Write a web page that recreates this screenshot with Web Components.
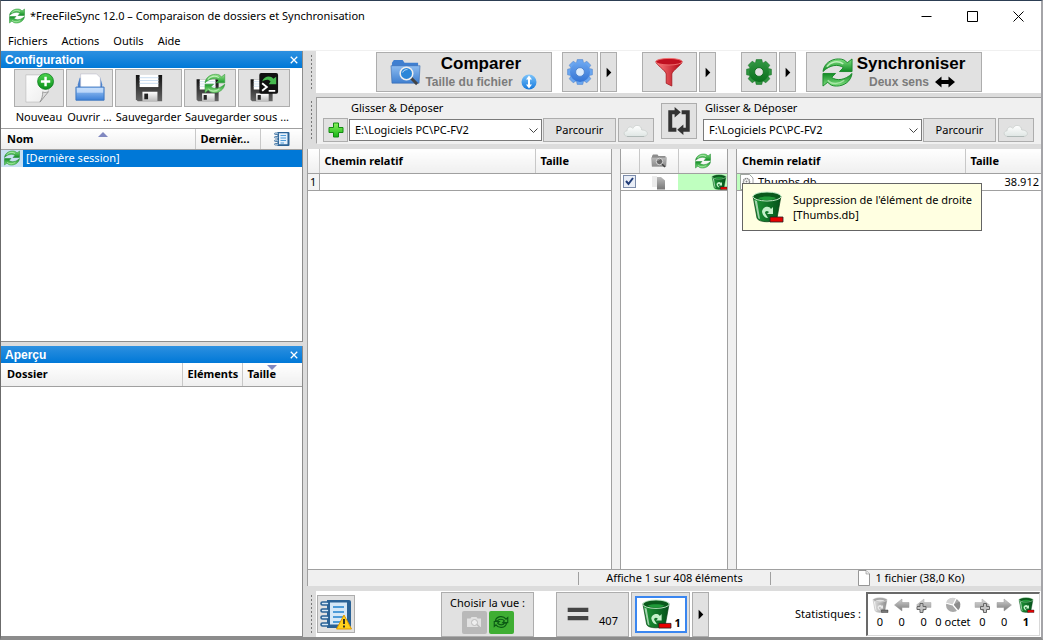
<!DOCTYPE html>
<html lang="fr">
<head>
<meta charset="utf-8">
<title>*FreeFileSync 12.0 – Comparaison de dossiers et Synchronisation</title>
<style>
  html, body { margin: 0; height: 100%; }
  body {
    font: 11px/16px "Noto Sans", "Open Sans", sans-serif;
    color: #000;
    background: #d4d2d8;
    overflow: hidden;
  }
</style>
</head>
<body>
<ffs-window></ffs-window>

<script>
const BASE = `
  *, *::before, *::after { box-sizing: border-box; }
  button, select { font: inherit; color: inherit; margin: 0; padding: 0; }
  table { border-collapse: collapse; border-spacing: 0; table-layout: fixed; width: 100%; }
  th, td { padding: 0; text-align: left; font-weight: normal; white-space: nowrap; overflow: hidden; }
  thead th { font-weight: bold; background: linear-gradient(#fff, #efefef); border-bottom: 1px solid #a0a0a0; }
`;

function define(name, css, html, setup) {
  const tpl = document.createElement('template');
  customElements.define(name, class extends HTMLElement {
    constructor() {
      super();
      this.attachShadow({ mode: 'open' });
    }
    connectedCallback() {
      if (this.shadowRoot.childNodes.length) return;
      tpl.innerHTML = `<style>${BASE}${css}</style>${typeof html === 'function' ? html(this) : html}`;
      this.shadowRoot.append(tpl.content.cloneNode(true));
      if (setup) setup(this);
    }
  });
}

/* ---------- icons ---------- */
const lin = (id, a, b, x2 = 0, y2 = 1) =>
  `<linearGradient id="${id}" x1="0" y1="0" x2="${x2}" y2="${y2}"><stop offset="0" stop-color="${a}"/><stop offset="1" stop-color="${b}"/></linearGradient>`;

const syncShape = (fill, stroke) => {
  const d = 'M1 15C2 7 9 2 17 2c4 0 7 1 9 4l5-4v13H18l4-4C17 7 8 8 1 15z';
  return `<path d="${d}" fill="${fill}" stroke="${stroke}"/><path d="M5 10C9 5 16 3 22 7" fill="none" stroke="#d4f7cf" stroke-width="1.600" opacity=".8"/>
    <path d="${d}" transform="rotate(180 16 16)" fill="${fill}" stroke="${stroke}"/><path d="M6 24c4 5 12 4 17 0" fill="none" stroke="#d4f7cf" stroke-width="1.600" opacity=".6"/>`;
};

const gear = (a, b, edge, hole) => {
  let teeth = '';
  for (let i = 0; i < 8; i++) teeth += `<path d="M11.500 8 12.800 1.800h6.400L20.500 8z" transform="rotate(${i * 45} 16 16)"/>`;
  return `<defs>${lin('g', a, b)}</defs><g fill="${a}" stroke="${edge}" stroke-width=".6">${teeth}</g>
    <circle cx="16" cy="16" r="11.500" fill="url(#g)"/><circle cx="16" cy="16" r="5" fill="${hole}" stroke="${edge}"/>`;
};

const bucket = (a, b, inner, edge, mark, badge) => `<defs>${lin('g', a, b, 1, 0)}</defs>
  <path d="M2 5 6 27c1 5 19 5 20 0L30 5z" fill="url(#g)" stroke="${edge}" stroke-width=".7"/>
  <path d="M3.500 9 7 26c0 1 1 2 2 2L6 10z" fill="#fff" opacity=".6"/>
  <ellipse cx="16" cy="5.500" rx="14" ry="4.500" fill="${inner}" stroke="${mark}"/>
  <path d="M7 7c4 3 14 3 18 0-5-2-13-2-18 0z" fill="${a}"/>
  <path d="M11 21c0-5 7-7 9-3l2-2v7h-6l2-2c-2-2-4-1-4 1l3 5c-3 0-5-2-6-6z" fill="${mark}"/>
  <path d="M19 26h13v5H19z" fill="${badge}" stroke="#222" stroke-width=".8"/>`;

const floppy = `<defs>${lin('g', '#111', '#666')}${lin('m', '#fff', '#bbb')}</defs>
  <path d="M2 2h28v28H4l-2-2z" fill="url(#g)"/><path d="M6 2h20v13H6z" fill="#fff"/>
  <path d="M6 5h20M6 8h20M6 11h20" stroke="#c8dcf0"/><path d="M9 20h16v10H9z" fill="url(#m)"/>
  <path d="M11 22h4v6h-4z" fill="#222"/>`;

const folderLens = (a, b, edge, lens) => `<defs>${lin('g', a, b)}</defs>
  <path d="M2 6 4 3h9l2 3h14v6H2z" fill="${b}"/><path d="M1 9h30l-1 18H2z" fill="url(#g)" stroke="${edge}" stroke-width=".6"/>
  <path d="m21 21 7 7" stroke="#444" stroke-width="3"/><circle cx="17" cy="17" r="6.500" fill="${lens}" stroke="#eee" stroke-width="1.600"/>
  <path d="M13 16c1-3 4-3 5-3" stroke="#fff" fill="none" opacity=".7"/>`;

const notebook = bg => `<path d="M7 2h22a2 2 0 0 1 2 2v24a2 2 0 0 1-2 2H7z" fill="#2a6296"/>
  <path d="M10 4.500h17v22H10z" fill="${bg}"/><path d="M13 9h11M13 14h11M13 19h11M13 24h7" stroke="#4d9bd8" stroke-width="2"/>
  <g fill="${bg}" stroke="#2a6296" stroke-width="1.600"><rect x="1" y="4" width="8" height="3" rx="1.500"/><rect x="1" y="11" width="8" height="3" rx="1.500"/><rect x="1" y="18" width="8" height="3" rx="1.500"/><rect x="1" y="25" width="8" height="3" rx="1.500"/></g>`;

const grayLeft = 'M1 16 16 4v7h14v10H16v7z';
const grayRight = 'M31 16 16 4v7H2v10h14v7z';
const grayPlus = x => `<path d="M${x} 13h6v6h6v6h-6v6h-6v-6h-6v-6h6z" fill="#c4c4c4" stroke="#666" stroke-width="2"/>`;

const ICONS = {
  sync: `<defs>${lin('g', '#7fe07f', '#118a24')}</defs>${syncShape('url(#g)', '#1c8a2c')}`,
  'sync-line': `<path d="M6 14C8 5 20 4 25 11l3-3v9h-9l3-3c-3-4-10-4-12 0zM26 18C24 27 12 28 7 21l-3 3v-9h9l-3 3c3 4 10 4 12 0z" fill="none" stroke="#0b5a14" stroke-width="2"/>`,
  'page-new': `<defs>${lin('g', '#fff', '#ececec', 1, 1)}${lin('n', '#4cd44c', '#0b8f1c')}</defs>
    <path d="M2 2h24v18l-9 11H2z" fill="url(#g)" stroke="#bbb" stroke-width=".7"/><path d="M26 20c-3 1-5 1-6 0 0 4-1 8-3 11z" fill="#ddd" stroke="#888" stroke-width=".8"/>
    <circle cx="23" cy="9" r="8.500" fill="url(#n)" stroke="#08781a" stroke-width=".8"/><path d="M23 4v10M18 9h10" stroke="#fff" stroke-width="2.600"/>`,
  open: `<defs>${lin('g', '#a8cdf8', '#3c80d8')}</defs><path d="M3 12 5 5h22l2 7v4H3z" fill="#4d83cc"/><path d="M6 1h17l4 4v12H6z" fill="#fff" stroke="#bbc" stroke-width=".6"/>
    <path d="M1 15h30v14H1z" fill="url(#g)" stroke="#3a74bf"/><path d="M2 16h28v5H2z" fill="#d4e7fd" opacity=".7"/>`,
  save: floppy,
  'save-sync': `<g transform="translate(0 5) scale(.84)">${floppy}</g><g transform="translate(10 0) scale(.7)"><defs>${lin('s', '#9be88f', '#189a2a')}</defs>${syncShape('url(#s)', '#3c9c42')}</g>`,
  'save-batch': `<g transform="translate(0 5) scale(.84)">${floppy}</g><rect x="11" width="20" height="22" rx="2" fill="#111"/>
    <path d="M14 9c2-6 9-7 12-3l3-2v8h-8l2-3c-2-3-6-2-9 0z" fill="#46b94e"/><path d="m14 11 5 4-5 4M21 19h7" fill="none" stroke="#fff" stroke-width="2"/>`,
  notebook: notebook('#e4f0fb'),
  log: notebook('#d6e8f7') + `<path d="M24 17 31.500 31h-15z" fill="#ffd21c" stroke="#e09a00"/><path d="M24 21v5M24 27.500v2" stroke="#222" stroke-width="1.800"/>`,
  compare: folderLens('#8dbcf0', '#3f7fd0', '#3468ad', '#2a86d8'),
  'compare-gray': folderLens('#b8b8b8', '#8c8c8c', '#888', '#666'),
  camera: `<path d="M2 9h7l2-3h10l2 3h7v17H2z" fill="#e2e2e2"/><circle cx="17" cy="17" r="6" fill="#eee" stroke="#bbb" stroke-width="2"/><path d="m22 21 6 6" stroke="#bbb" stroke-width="3"/>`,
  size: `<defs>${lin('g', '#7cc4fb', '#1478dc')}</defs><circle cx="16" cy="16" r="15" fill="url(#g)"/><path d="m16 3 6 8h-4v10h4l-6 8-6-8h4V11h-4z" fill="#fff"/>`,
  both: `<path d="m-4 16 13-11v7h14V5l13 11-13 11v-7H9v7z" fill="#000"/>`,
  'gear-blue': gear('#6aa6f0', '#3474d4', '#4a80cc', '#dcebfb'),
  'gear-green': gear('#2f9440', '#0a701d', '#0d6b1c', '#e1e1e1'),
  filter: `<defs>${lin('g', '#ff8080', '#b00010', 1, 0)}</defs><path d="M2 5c0 3 10 9 11 13v10l6 3V18c1-4 11-10 11-13z" fill="url(#g)" stroke="#a01018" stroke-width=".8"/><ellipse cx="16" cy="5" rx="14" ry="3.500" fill="#c01020" stroke="#f07070"/>`,
  plus: `<defs>${lin('g', '#8af45c', '#14b414')}</defs><path d="M11 2h10v9h9v10h-9v9H11v-9H2V11h9z" fill="url(#g)" stroke="#128a12" stroke-width="2"/>`,
  cloud: `<defs>${lin('g', '#fff', '#dfe6e4')}</defs><path d="M6 24c-6 0-6-7-1-7 0-5 5-6 7-3 3-6 11-4 11 2 9 0 9 8 2 8z" fill="url(#g)" stroke="#c4cac8" stroke-width=".8"/><path d="M5 24h21" stroke="#a9b3b0"/>`,
  swap: `<g fill="none" stroke="#333" stroke-width="4.500"><path d="M13 26H6V6h6"/><path d="M19 6h7v20h-6"/></g><path d="m11 0 7 6-7 6zM21 20l-7 6 7 6z" fill="#333"/>`,
  doc: `<path d="M5 1h15l7 7v23H5z" fill="#fff" stroke="#777" stroke-width="1.500"/><path d="M20 1v7h7" fill="#eee" stroke="#777"/>`,
  'doc-gear': `<path d="M3 1h18l7 7v23H3z" fill="#fff" stroke="#888" stroke-width="1.500"/><circle cx="15" cy="15" r="6" fill="none" stroke="#888" stroke-width="3" stroke-dasharray="3 1"/><circle cx="15" cy="15" r="2" fill="#888"/>`,
  files: `<path d="M2 4h10v22H2z" fill="#ececec"/><defs>${lin('g', '#bbb', '#777')}</defs><path d="M12 6h8l8 7v18H12z" fill="url(#g)"/>`,
  equal: `<path d="M1 7h30v6H1zM1 19h30v6H1z" fill="#444"/>`,
  'bin-green': bucket('#1f9a38', '#04501a', '#0a5a1c', '#033c10', '#c4efca', '#e80000'),
  'bin-gray': bucket('#e4e4e4', '#8c8c8c', '#a8a8a8', '#999', '#e8e8e8', '#777'),
  left: `<defs>${lin('g', '#d0d0d0', '#7a7a7a')}</defs><path d="${grayLeft}" fill="url(#g)" stroke="#999"/>`,
  right: `<defs>${lin('g', '#d0d0d0', '#7a7a7a')}</defs><path d="${grayRight}" fill="url(#g)" stroke="#999"/>`,
  'left-add': `<defs>${lin('g', '#d8d8d8', '#999')}</defs><path d="${grayLeft}" fill="url(#g)" stroke="#aaa"/>${grayPlus(8)}`,
  'right-add': `<defs>${lin('g', '#d8d8d8', '#999')}</defs><path d="${grayRight}" fill="url(#g)" stroke="#aaa"/>${grayPlus(19)}`,
  pie: `<circle cx="16" cy="16" r="14" fill="#a8a8a8"/><path d="M16 16 2 12A14 14 0 0 1 22 3z" fill="#d2d2d2"/><path d="M16 16 29 9a14 14 0 0 1-4 18z" fill="#8c8c8c"/><path d="M1 12 16 16 23 2M16 16l10 12" stroke="#fff" stroke-width="2.500" fill="none"/>`,
  more: `<path d="M12 6v20l10-10z" fill="#000"/>`,
  close: `<path d="m3 3 26 26M29 3 3 29" stroke="currentColor" stroke-width="5" fill="none"/>`,
};

define('ffs-icon',
  `:host { display: inline-block; flex: none; width: var(--w, 16px); height: var(--w, 16px); }
   svg { display: block; width: 100%; height: 100%; overflow: visible; }`,
  el => `<svg viewBox="0 0 32 32" aria-hidden="true">${ICONS[el.getAttribute('name')]}</svg>`);

/* ---------- small controls ---------- */
define('ffs-button',
  `:host { display: block; flex: none; }
   button { display: flex; align-items: center; justify-content: center; gap: var(--gap, 0); width: 100%; height: 100%;
            background: var(--bg, #e1e1e1); border: 1px solid #adadad; white-space: nowrap; }`,
  el => `<button type="button" ${el.hasAttribute('label') ? `aria-label="${el.getAttribute('label')}"` : ''}><slot></slot></button>`);

define('ffs-path-select',
  `:host { display: block; position: relative; }
   select { appearance: none; width: 100%; height: 100%; padding: 0 24px 0 5px; border: 1px solid #7a7a7a; border-radius: 0; background: #fff; }
   svg { position: absolute; right: 4px; top: 9px; width: 9px; height: 6px; pointer-events: none; }`,
  el => `<select aria-label="Dossier"><option>${el.getAttribute('value')}</option></select>
    <svg viewBox="0 0 9 6"><path d="M.500.500 4.500 4.500l4-4" fill="none" stroke="#444"/></svg>`);

define('ffs-action',
  `:host { display: block; flex: none; width: 176px; height: 40px; }
   button { display: flex; align-items: center; justify-content: center; gap: 4px; width: 100%; height: 100%; background: #e1e1e1; border: 1px solid #adadad; font-family: "Liberation Sans", Arial, sans-serif; font-weight: bold; }
   .t { display: block; font-size: 17px; line-height: 20px; }
   .s { display: flex; align-items: center; justify-content: center; gap: 8px; font-size: 12px; line-height: 16px; color: #7b7b7b; white-space: nowrap; }`,
  `<button type="button"><slot name="icon"></slot><span><span class="t"><slot name="title"></slot></span><span class="s"><slot></slot></span></span></button>`);

define('ffs-bar',
  `:host { display: flex; background: #dcdcdc; }
   .grip { flex: none; width: 9px; padding: 4px 0 4px 4px; }
   .grip i { display: block; width: 1px; height: 100%; background: repeating-linear-gradient(#777 0 2px, #dcdcdc 2px 4px); }
   .content { flex: 1; min-width: 0; }`,
  `<div class="grip"><i></i></div><div class="content"><slot></slot></div>`);

/* ---------- window chrome ---------- */
define('ffs-titlebar',
  `:host { display: flex; align-items: center; height: 30px; background: #fff; padding-left: 8px; }
   h1 { flex: 1; margin: 0 0 0 5px; font-size: inherit; font-weight: normal; }
   button { width: 46px; height: 30px; border: 0; background: none; display: grid; place-items: center; }
   svg { display: block; width: 11px; height: 11px; fill: none; stroke: #000; }`,
  `<ffs-icon name="sync"></ffs-icon>
   <h1>*FreeFileSync 12.0 – Comparaison de dossiers et Synchronisation</h1>
   <button type="button" aria-label="Réduire"><svg viewBox="0 0 11 11"><path d="M.500 5.500h10"/></svg></button>
   <button type="button" aria-label="Agrandir"><svg viewBox="0 0 11 11"><path d="M.500.500h10v10H.500z"/></svg></button>
   <button type="button" aria-label="Fermer"><svg viewBox="0 0 11 11"><path d="m.500.500 10 10M10.500.500l-10 10"/></svg></button>`);

define('ffs-menubar',
  `:host { display: flex; align-items: center; gap: 14px; height: 20px; padding-left: 7px; background: #fff; border-bottom: 1px solid #f0f0f0; }
   button { border: 0; background: none; }`,
  `<button type="button">Fichiers</button><button type="button">Actions</button><button type="button">Outils</button><button type="button">Aide</button>`);

/* ---------- left docks ---------- */
define('ffs-dock',
  `:host { display: flex; flex-direction: column; background: #fff; border: 1px solid #8c8c8c; border-width: 0 1px 1px 0; min-height: 0; }
   header { flex: none; display: flex; align-items: center; justify-content: space-between; height: 17px; padding: 0 4px 0 4px; color: #fff; background: linear-gradient(#2d90e0, #0078d7); }
   h2 { margin: 0; font: bold 12px/16px "Liberation Sans", Arial, sans-serif; }
   button { border: 0; background: none; color: #fff; --w: 8px; display: grid; place-items: center; }`,
  el => `<header><h2>${el.getAttribute('title-text')}</h2><button type="button" aria-label="Fermer"><ffs-icon name="close"></ffs-icon></button></header><slot></slot>`);

define('ffs-config-tools',
  `:host { display: grid; grid-template-columns: 50px 47px 67px 52px 52px; grid-template-rows: 38px 20px; column-gap: 2px; justify-content: center; padding: 1px 0 1px 1px; border-bottom: 1px solid #a0a0a0; }
   ffs-button { height: 38px; } ffs-icon { --w: 30px; }
   span { text-align: center; align-self: center; line-height: 16px; white-space: nowrap; }
   .wide { grid-column: 4 / 6; }`,
  `<ffs-button label="Nouveau"><ffs-icon name="page-new"></ffs-icon></ffs-button>
   <ffs-button label="Ouvrir"><ffs-icon name="open"></ffs-icon></ffs-button>
   <ffs-button label="Sauvegarder"><ffs-icon name="save"></ffs-icon></ffs-button>
   <ffs-button label="Sauvegarder sous"><ffs-icon name="save-sync"></ffs-icon></ffs-button>
   <ffs-button label="Sauvegarder en lot"><ffs-icon name="save-batch"></ffs-icon></ffs-button>
   <span>Nouveau</span><span>Ouvrir ...</span><span>Sauvegarder</span><span class="wide">Sauvegarder sous ...</span>`);

const SORT = `.sort { position: absolute; left: 50%; width: 0; border: 5px solid transparent; }
   .up { top: 3px; border-top: 0; border-bottom-color: #8088c0; } .down { top: 2px; left: 24px; border-bottom: 0; border-top-color: #8088c0; }
   th { position: relative; } th + th { border-left: 1px solid #c8c8c8; }`;

define('ffs-config-list',
  `:host { display: block; }
   ${SORT}
   thead th { height: 20px; padding-left: 6px; } thead th + th { padding-left: 5px; }
   tbody tr { background: #0078d7; color: #fff; height: 17px; }
   td div { display: flex; align-items: center; }
   td i { display: grid; place-items: center; width: 22px; height: 17px; margin-right: 3px; background: #c8dff2; }
   .c2 { width: 65px; } .c3 { width: 42px; } .log { display: block; margin: 0 0 0 8px; }`,
  `<table><colgroup><col><col class="c2"><col class="c3"></colgroup>
   <thead><tr><th>Nom<i class="sort up"></i></th><th>Dernièr...</th><th aria-label="Journal"><ffs-icon class="log" name="notebook"></ffs-icon></th></tr></thead>
   <tbody><tr><td colspan="3"><div><i><ffs-icon name="sync"></ffs-icon></i>[Dernière session]</div></td></tr></tbody></table>`);

define('ffs-overview-list',
  `:host { display: block; }
   ${SORT}
   thead th { height: 23px; padding-left: 6px; } thead th + th { padding-left: 5px; }
   .c2, .c3 { width: 60px; }`,
  `<table><colgroup><col><col class="c2"><col class="c3"></colgroup>
   <thead><tr><th>Dossier</th><th>Eléments</th><th>Taille<i class="sort down"></i></th></tr></thead></table>`);

/* ---------- main toolbar ---------- */
define('ffs-main-tools',
  `:host { display: flex; align-items: center; justify-content: center; height: 42px; background: #fff; }
   .group { display: flex; gap: 2px; margin: 0 10px; }
   .far { margin: 0 15px; }
   ffs-button { width: 36px; height: 40px; --w: 28px; } .drop { width: 17px; --w: 15px; } .filter { width: 55px; --w: 30px; }
   .big { --w: 31px; } .mini { --w: 16px; }`,
  `<ffs-action><ffs-icon slot="icon" class="big" name="compare"></ffs-icon><span slot="title">Comparer</span>Taille du fichier <ffs-icon class="mini" name="size"></ffs-icon></ffs-action>
   <div class="group"><ffs-button label="Paramètres de comparaison"><ffs-icon name="gear-blue"></ffs-icon></ffs-button><ffs-button class="drop" label="Variantes"><ffs-icon name="more"></ffs-icon></ffs-button></div>
   <div class="group far"><ffs-button class="filter" label="Filtre"><ffs-icon name="filter"></ffs-icon></ffs-button><ffs-button class="drop" label="Options du filtre"><ffs-icon name="more"></ffs-icon></ffs-button></div>
   <div class="group"><ffs-button label="Paramètres de synchronisation"><ffs-icon name="gear-green"></ffs-icon></ffs-button><ffs-button class="drop" label="Variantes"><ffs-icon name="more"></ffs-icon></ffs-button></div>
   <ffs-action><ffs-icon slot="icon" class="big" name="sync"></ffs-icon><span slot="title">Synchroniser</span>Deux sens <ffs-icon name="both" class="mini"></ffs-icon></ffs-action>`);

define('ffs-folder-pair',
  `:host { display: flex; gap: 7px; height: 47px; padding: 0 7px 0 6px; background: #f0f0f0; border: 1px solid #a0a0a0; border-right: 0; border-bottom-color: #f0f0f0; }
   .side { flex: 1; min-width: 0; }
   .right { margin-left: -1px; }
   .name { display: block; line-height: 20px; padding-left: 28px; }
   .right .name { padding-left: 2px; }
   .row { display: flex; gap: 1px; }
   .row > * { height: 24px; } .row > ffs-path-select { flex: 1; height: 22px; margin-top: 1px; }
   .add { width: 25px; } .browse { width: 73px; } .cloud { width: 36px; margin-left: 1px; --w: 26px; }
   .swap { width: 36px; height: 36px; margin-top: 5px; --w: 28px; }`,
  `<div class="side"><span class="name">Glisser &amp; Déposer</span><div class="row">
     <ffs-button class="add" label="Ajouter une paire"><ffs-icon name="plus"></ffs-icon></ffs-button>
     <ffs-path-select value="E:\\Logiciels PC\\PC-FV2"></ffs-path-select>
     <ffs-button class="browse">Parcourir</ffs-button><ffs-button class="cloud" label="Stockage en ligne"><ffs-icon name="cloud"></ffs-icon></ffs-button></div></div>
   <ffs-button class="swap" label="Échanger les côtés"><ffs-icon name="swap"></ffs-icon></ffs-button>
   <div class="side right"><span class="name">Glisser &amp; Déposer</span><div class="row">
     <ffs-path-select value="F:\\Logiciels PC\\PC-FV2"></ffs-path-select>
     <ffs-button class="browse">Parcourir</ffs-button><ffs-button class="cloud" label="Stockage en ligne"><ffs-icon name="cloud"></ffs-icon></ffs-button></div></div>`);

/* ---------- file grids ---------- */
const GRID = `:host { display: block; background: #fff; border: 1px solid #a0a0a0; border-width: 0 1px; min-width: 0; }
   thead th { height: 24px; padding-left: 5px; } th + th { border-left: 1px solid #c8c8c8; }
   tbody td { height: 17px; border-bottom: 1px solid #a0a0a0; }`;

define('ffs-grid-left',
  `${GRID} .n { width: 11px; } .size { width: 76px; } td:first-child { text-align: center; border-right: 1px solid #a0a0a0; background: #f4f4f4; }
   thead th:first-child { padding: 0; }`,
  `<table><colgroup><col class="n"><col><col class="size"></colgroup>
   <thead><tr><th></th><th>Chemin relatif</th><th>Taille</th></tr></thead><tbody><tr><td>1</td><td></td><td></td></tr></tbody></table>`);

define('ffs-grid-actions',
  `${GRID} .a { width: 18px; } .b { width: 39px; }
   thead th { padding: 0; } ffs-icon { display: block; margin: 0 auto; }
   input { display: block; margin: 0 0 0 2px; width: 13px; height: 13px; appearance: none; border: 1px solid #7c8cab; background: #e9eef7; }
   input:checked { background: #e9eef7 url('data:image/svg+xml,<svg xmlns="http://www.w3.org/2000/svg" viewBox="0 0 11 11"><path d="m2 5 2.500 3L9 2" fill="none" stroke="%23203c78" stroke-width="2"/></svg>'); }
   .act { background: #bfffbf; } .act ffs-icon { margin-right: 0; }`,
  `<table><colgroup><col class="a"><col class="b"><col></colgroup>
   <thead><tr><th></th><th aria-label="Catégorie"><ffs-icon name="compare-gray"></ffs-icon></th><th aria-label="Action"><ffs-icon name="sync"></ffs-icon></th></tr></thead>
   <tbody><tr><td><input type="checkbox" checked aria-label="Thumbs.db"></td><td><ffs-icon name="files"></ffs-icon></td><td class="act"><ffs-icon name="bin-green"></ffs-icon></td></tr></tbody></table>`);

define('ffs-grid-right',
  `${GRID} :host { position: relative; border-right: 0; } .size { width: 76px; }
   td div { display: flex; align-items: center; height: 16px; padding-left: 2px; gap: 3px; background: linear-gradient(90deg, #bfffbf 0 4px, #fff 16px); }
   td:last-child { text-align: right; padding-right: 2px; }
   ::slotted(*) { position: absolute; left: 5px; top: 34px; }`,
  `<table><colgroup><col><col class="size"></colgroup>
   <thead><tr><th>Chemin relatif</th><th>Taille</th></tr></thead><tbody><tr><td><div><ffs-icon name="doc-gear"></ffs-icon>Thumbs.db</div></td><td>38.912</td></tr></tbody></table><slot></slot>`);

define('ffs-tooltip',
  `:host { display: flex; align-items: center; gap: 10px; width: 240px; height: 48px; padding: 0 0 0 8px; background: #ffffe1; border: 1px solid #646464; --w: 32px; box-sizing: border-box; line-height: 15px; white-space: nowrap; }`,
  `<ffs-icon name="bin-green"></ffs-icon><span>Suppression de l'élément de droite<br>[Thumbs.db]</span>`);

define('ffs-grids',
  `:host { display: grid; grid-template-columns: minmax(0, 1fr) 108px minmax(0, 1fr); gap: 8px; background: #f0f0f0; min-height: 0; }`,
  `<ffs-grid-left></ffs-grid-left><ffs-grid-actions></ffs-grid-actions><ffs-grid-right><ffs-tooltip role="tooltip"></ffs-tooltip></ffs-grid-right>`);

define('ffs-status',
  `:host { display: flex; align-items: center; height: 17px; background: #f0f0f0; border: 1px solid #a0a0a0; border-width: 1px 0 0 1px; }
   div { flex: 1; display: flex; align-items: center; justify-content: center; gap: 3px; padding-left: 9px; height: 16px; }
   .mid { flex: none; width: 193px; padding: 0; border: 1px solid #a0a0a0; border-width: 0 1px; height: 13px; }`,
  `<div></div><div class="mid">Affiche 1 sur 408 éléments</div><div><ffs-icon name="doc"></ffs-icon>1 fichier (38,0 Ko)</div>`);

/* ---------- bottom bar ---------- */
define('ffs-stats',
  `:host { display: flex; justify-content: space-between; width: 174px; height: 44px; padding: 3px 3px 0 2px; border: 1px solid #a0a0a0; border-width: 2px 1px 1px 2px; border-color: #696969 #d8d8d8 #d8d8d8 #696969; box-sizing: border-box; }
   div { display: flex; flex-direction: column; align-items: center; min-width: 20px; line-height: 18px; white-space: nowrap; }
   b { font-weight: bold; }`,
  `<div><ffs-icon name="bin-gray"></ffs-icon>0</div><div><ffs-icon name="left"></ffs-icon>0</div><div><ffs-icon name="left-add"></ffs-icon>0</div>
   <div><ffs-icon name="pie"></ffs-icon>0 octet</div>
   <div><ffs-icon name="right-add"></ffs-icon>0</div><div><ffs-icon name="right"></ffs-icon>0</div><div><ffs-icon name="bin-green"></ffs-icon><b>1</b></div>`);

define('ffs-bottom',
  `:host { display: flex; align-items: center; height: 46px; padding: 0 1px; background: #fff; }
   .log { width: 38px; height: 38px; --w: 32px; }
   .view { margin: 0 22px 0 auto; width: 93px; height: 45px; padding-top: 2px; background: #e1e1e1; border: 1px solid #adadad; text-align: center; box-sizing: border-box; }
   .view div { display: flex; justify-content: center; gap: 2px; }
   .view button { width: 25px; height: 23px; border: 0; border-radius: 2px; display: grid; place-items: center; background: #b9b9b9; }
   .view .on { background: #3fae33; --w: 18px; }
   .filters { display: flex; gap: 2px; }
   .filters > * { height: 45px; }
   .eq { width: 73px; --gap: 10px; --w: 22px; } .bin { width: 59px; } .drop { width: 17px; --w: 15px; }
   .sel { display: flex; align-items: center; gap: 4px; height: 37px; width: 52px; padding-left: 4px; background: #fff; border: 2px solid #3a86f0; --w: 30px; }
   .low { align-self: flex-end; }
   .eq .low { padding-bottom: 7px; }
   .stat { margin: 0 5px 0 auto; }`,
  `<ffs-button class="log" label="Journal"><ffs-icon name="log"></ffs-icon></ffs-button>
   <div class="view">Choisir la vue :<div><button type="button" aria-label="Catégorie"><ffs-icon name="camera"></ffs-icon></button><button type="button" class="on" aria-label="Action"><ffs-icon name="sync-line"></ffs-icon></button></div></div>
   <div class="filters"><ffs-button class="eq"><ffs-icon name="equal"></ffs-icon><span class="low">407</span></ffs-button>
   <ffs-button class="bin"><span class="sel"><ffs-icon name="bin-green"></ffs-icon><b class="low">1</b></span></ffs-button>
   <ffs-button class="drop" label="Options"><ffs-icon name="more"></ffs-icon></ffs-button></div>
   <span class="stat">Statistiques :</span><ffs-stats></ffs-stats>`);

/* ---------- application window ---------- */
define('ffs-window',
  `:host { display: flex; flex-direction: column; height: 100vh; box-sizing: border-box; border: solid #6b6b6b; border-width: 1px 2px 3px 1px; border-top-color: #2c3e54; border-right-color: #a4a4a8; border-bottom-color: #8c8c8c; }
   main { flex: 1; display: flex; min-height: 0; background: #dcdcdc; }
   aside { flex: none; width: 302px; display: flex; flex-direction: column; gap: 4px; }
   .config { flex: 0 0 291px; } .overview { flex: 1; }
   section { flex: 1; min-width: 0; display: flex; flex-direction: column; margin-left: 4px; }
   .pair { margin: 4px 0 5px; }
   ffs-grids { flex: 1; } .bottom { margin-top: 5px; }`,
  `<ffs-titlebar></ffs-titlebar><ffs-menubar></ffs-menubar>
   <main><aside>
     <ffs-dock class="config" title-text="Configuration"><ffs-config-tools></ffs-config-tools><ffs-config-list></ffs-config-list></ffs-dock>
     <ffs-dock class="overview" title-text="Aperçu"><ffs-overview-list></ffs-overview-list></ffs-dock>
   </aside><section>
     <ffs-bar><ffs-main-tools></ffs-main-tools></ffs-bar>
     <ffs-bar class="pair"><ffs-folder-pair></ffs-folder-pair></ffs-bar>
     <ffs-grids></ffs-grids>
     <ffs-status></ffs-status>
     <ffs-bar class="bottom"><ffs-bottom></ffs-bottom></ffs-bar>
   </section></main>`);
</script>
</body>
</html>
